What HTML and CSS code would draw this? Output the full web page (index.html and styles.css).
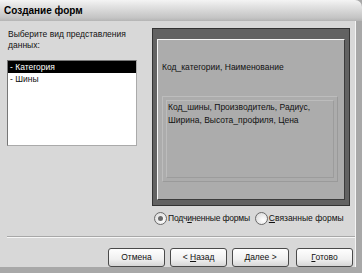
FILE: index.html
```html
<!doctype html>
<html><head>
<meta charset="utf-8">
<title>Создание форм</title>
<link rel="stylesheet" href="styles.css">
</head>
<body>
<div class="window">
	<div class="titlebar">Создание форм</div>
	<div class="client">
		<div class="main">
			<div class="left">
				<div class="prompt">Выберите вид представления<br>данных:</div>
				<div class="listbox">
					<div class="item selected">- Категория</div>
					<div class="item">- Шины</div>
				</div>
			</div>
			<div class="right">
				<div class="preview">
					<div class="preview-inner">
						<div class="main-fields">Код_категории, Наименование</div>
						<div class="subform">
							<div class="subform-inner">Код_шины, Производитель, Радиус,<br>Ширина, Высота_профиля, Цена</div>
						</div>
					</div>
				</div>
				<div class="radios">
					<label class="radio"><span class="dot checked"></span><span class="tight">Подч<u>и</u>ненные формы</span></label>
					<label class="radio"><span class="dot"></span><span><u>С</u>вязанные формы</span></label>
				</div>
			</div>
		</div>
		<div class="separator"></div>
		<div class="buttons">
			<span class="btn">Отмена</span>
			<span class="btn">&lt; <u>Н</u>азад</span>
			<span class="btn"><u>Д</u>алее &gt;</span>
			<span class="btn gap"><u>Г</u>отово</span>
		</div>
	</div>
</div>
</body></html>
```

FILE: styles.css
```css
html, body { margin: 0; padding: 0; }
body {
	font-family: "Liberation Sans", Arial, sans-serif;
	font-size: 8.5px;
	color: #111;
	background: #9c9c9c;
}
.window {
	width: 362px;
	height: 273px;
	display: flex;
	flex-direction: column;
	background: #a8a8a8;
	overflow: hidden;
}
.titlebar {
	height: 21px;
	line-height: 22px;
	padding-left: 4px;
	font-size: 10px;
	font-weight: bold;
	color: #000;
	background: linear-gradient(#f4f4f4, #e2e2e2 30%, #c4c4c4 85%, #b4b4b4);
	border-top-right-radius: 7px;
}
.client {
	flex: 1;
	margin: 0 6px 6px 0;
	background: #d8d8d8;
	border-right: 1px solid #f4f4f4;
	display: flex;
	flex-direction: column;
}
.main {
	display: flex;
	padding: 7px 0 0 7px;
	gap: 15px;
}
.left {
	width: 130px;
}
.prompt {
	padding: 1px 0 0 1px;
	line-height: 11px;
	height: 31px;
}
.listbox {
	height: 84px;
	background: #fff;
	border: 1px solid #777;
	border-right-color: #aaa;
	border-bottom-color: #aaa;
}
.item {
	height: 12px;
	line-height: 12px;
	padding-left: 2px;
}
.item.selected {
	background: #000;
	color: #fff;
}
.right {
	width: 198px;
}
.preview {
	height: 178px;
	box-sizing: border-box;
	background: #626262;
	border: 1px solid #333;
	padding: 10px 4px 5px 4px;
}
.preview-inner {
	height: 100%;
	box-sizing: border-box;
	background: #acacac;
	border: 1px solid #3c3c3c;
	border-top-color: #f6f6f6;
	border-left-color: #f6f6f6;
	padding: 22px 4px 0 4px;
}
.main-fields {
	height: 34px;
	color: #111;
}
.subform {
	width: 176px;
	height: 86px;
	box-sizing: border-box;
	border: 1px solid #bdbdbd;
	border-right-color: #9a9a9a;
	border-bottom-color: #9a9a9a;
	padding: 3px;
}
.subform-inner {
	height: 100%;
	box-sizing: border-box;
	border: 1px solid #bcbcbc;
	border-right-color: #9c9c9c;
	border-bottom-color: #9c9c9c;
	padding: 0 0 0 1px;
	line-height: 13px;
}
.radios {
	display: flex;
	gap: 5px;
	padding: 5px 0 0 2px;
	align-items: center;
}
.radio {
	display: flex;
	align-items: center;
	gap: 1px;
	height: 14px;
	white-space: nowrap;
}
.tight { letter-spacing: -0.2px; }
.dot {
	width: 11px;
	height: 11px;
	border-radius: 50%;
	border: 1px solid #6a6a6a;
	background: radial-gradient(circle at 65% 65%, #fff, #d4d4d4);
	position: relative;
}
.dot.checked::after {
	content: "";
	position: absolute;
	left: 3px;
	top: 3px;
	width: 5px;
	height: 5px;
	border-radius: 50%;
	background: #6a6a6a;
}
.separator {
	margin: 11px 0 0 7px;
	border-top: 1px solid #a8a8a8;
	border-bottom: 1px solid #f6f6f6;
}
.buttons {
	display: flex;
	justify-content: flex-end;
	gap: 5px;
	padding: 10px 2px 0 0;
}
.btn {
	width: 55px;
	height: 17px;
	line-height: 17px;
	text-align: center;
	border: 1px solid #4a4a4a;
	border-radius: 3px;
	background: linear-gradient(#fefefe, #f0f0f0 60%, #d6d6d6);
	color: #111;
}
.btn.gap { margin-left: 2px; }
```
